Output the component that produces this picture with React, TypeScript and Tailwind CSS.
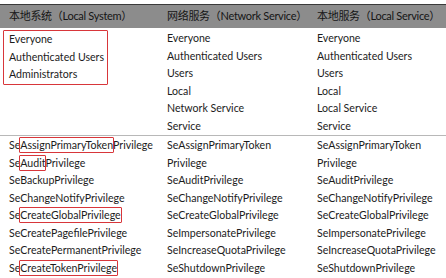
const font = { fontFamily: '"Lato", "Noto Sans CJK SC", sans-serif' };

const col2Top = ['Everyone', 'Authenticated Users', 'Users', 'Local', 'Network Service', 'Service'];
const col3Top = ['Everyone', 'Authenticated Users', 'Users', 'Local', 'Local Service', 'Service'];

const col2Priv = [
  'SeAssignPrimaryToken',
  'Privilege',
  'SeAuditPrivilege',
  'SeChangeNotifyPrivilege',
  'SeCreateGlobalPrivilege',
  'SeImpersonatePrivilege',
  'SeIncreaseQuotaPrivilege',
  'SeShutdownPrivilege',
];

function Mark({ children }: { children: React.ReactNode }) {
  return (
    <span className="relative">
      {children}
      <span className="absolute -left-[1px] -right-[1px] -top-[2px] -bottom-[2px] border-[1.5px] border-[#d8363a] rounded-[1px]" />
    </span>
  );
}

function Row({ children }: { children: React.ReactNode }) {
  return <div className="h-[17.5px] leading-[17.5px] whitespace-nowrap">{children}</div>;
}

export default function App() {
  return (
    <div className="w-[446px] h-[278px] bg-white text-[10.6px] text-[#1c1c1c] overflow-hidden" style={font}>
      <div className="mt-[4px] h-[24px] bg-[#8c8c8c] border-t-[1.5px] border-[#3a3a3a] grid grid-cols-[158px_150px_1fr] items-center text-[11px] tracking-[-0.3px] text-[#151515] whitespace-nowrap">
        <div className="pl-[9px]">本地系统（Local System）</div>
        <div className="pl-[9px]">网络服务（Network Service）</div>
        <div className="pl-[9px]">本地服务（Local Service）</div>
      </div>

      <div className="grid grid-cols-[158px_150px_1fr] pt-[2px]">
        <div>
          <div className="ml-[3px] w-[105px] border-[1.5px] border-[#d8363a] rounded-[1px] pl-[5px]">
            <Row>Everyone</Row>
            <Row>Authenticated Users</Row>
            <Row>Administrators</Row>
          </div>
        </div>
        <div className="pl-[9px]">
          {col2Top.map((t, i) => (
            <Row key={i}>{t}</Row>
          ))}
        </div>
        <div className="pl-[9px]">
          {col3Top.map((t, i) => (
            <Row key={i}>{t}</Row>
          ))}
        </div>
      </div>

      <div className="h-[1px] bg-[#b8b8b8]" />

      <div className="grid grid-cols-[158px_150px_1fr] pt-[1px]">
        <div className="pl-[9px]">
          <Row>
            Se<Mark>AssignPrimaryToken</Mark>Privilege
          </Row>
          <Row>
            Se<Mark>Audit</Mark>Privilege
          </Row>
          <Row>SeBackupPrivilege</Row>
          <Row>SeChangeNotifyPrivilege</Row>
          <Row>
            Se<Mark>CreateGlobalPrivilege</Mark>
          </Row>
          <Row>SeCreatePagefilePrivilege</Row>
          <Row>SeCreatePermanentPrivilege</Row>
          <Row>
            Se<Mark>CreateTokenPrivilege</Mark>
          </Row>
        </div>
        <div className="pl-[9px]">
          {col2Priv.map((t, i) => (
            <Row key={i}>{t}</Row>
          ))}
        </div>
        <div className="pl-[9px]">
          {col2Priv.map((t, i) => (
            <Row key={i}>{t}</Row>
          ))}
        </div>
      </div>
    </div>
  );
}
